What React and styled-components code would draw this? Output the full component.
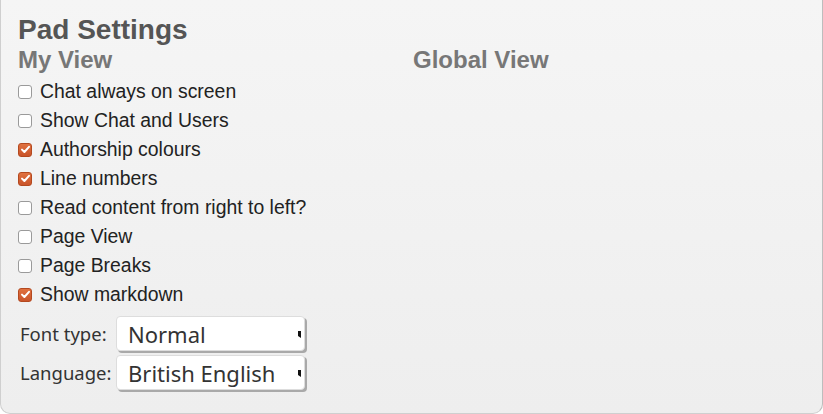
import styled, { createGlobalStyle } from 'styled-components'

const GlobalStyle = createGlobalStyle`
  html, body {
    margin: 0;
    padding: 0;
    background: #ffffff;
  }
  body {
    font-family: "Liberation Sans", Arial, sans-serif;
  }
`

const myView = [
  { label: 'Chat always on screen', checked: false },
  { label: 'Show Chat and Users', checked: false },
  { label: 'Authorship colours', checked: true },
  { label: 'Line numbers', checked: true },
  { label: 'Read content from right to left?', checked: false },
  { label: 'Page View', checked: false },
  { label: 'Page Breaks', checked: false },
  { label: 'Show markdown', checked: true },
]

const selects = [
  { label: 'Font type:', value: 'Normal' },
  { label: 'Language:', value: 'British English' },
]

const Check = ({ checked }) => (
  <Box checked={checked}>
    {checked && (
      <svg width="11" height="11" viewBox="0 0 11 11">
        <path d="M2 5.6 L4.4 8 L9 2.8" fill="none" stroke="#fff" strokeWidth="2" strokeLinecap="round" strokeLinejoin="round" />
      </svg>
    )}
  </Box>
)

const App = () => (
  <>
    <GlobalStyle />
    <Panel>
      <Title>Pad Settings</Title>
      <Columns>
        <Column>
          <Heading>My View</Heading>
          <List>
            {myView.map((o) => (
              <Row key={o.label}>
                <Check checked={o.checked} />
                <Label>{o.label}</Label>
              </Row>
            ))}
          </List>
          <Selects>
            {selects.map((s) => (
              <SelectRow key={s.label}>
                <SelectLabel>{s.label}</SelectLabel>
                <Dropdown>
                  <span>{s.value}</span>
                  <Arrow />
                </Dropdown>
              </SelectRow>
            ))}
          </Selects>
        </Column>
        <Column>
          <Heading>Global View</Heading>
        </Column>
      </Columns>
    </Panel>
  </>
)

export default App

const Panel = styled.div`
  box-sizing: border-box;
  width: 823px;
  height: 414px;
  padding: 14px 0 0 17px;
  background: linear-gradient(to bottom, #f5f5f5 0%, #eeeeee 100%);
  border: 1px solid #cfcfcf;
  border-top: none;
  border-right-color: #bdbdbd;
  border-radius: 0 0 10px 10px;
`

const Title = styled.h1`
  margin: 0;
  font-size: 28px;
  line-height: 32px;
  font-weight: bold;
  color: #555555;
`

const Columns = styled.div`
  display: grid;
  grid-template-columns: 395px 1fr;
`

const Column = styled.div`
  display: flex;
  flex-direction: column;
`

const Heading = styled.h2`
  margin: 0;
  font-size: 24px;
  line-height: 28px;
  font-weight: bold;
  color: #777777;
`

const List = styled.div`
  display: flex;
  flex-direction: column;
  margin-top: 3px;
`

const Row = styled.label`
  display: flex;
  align-items: center;
  height: 29px;
  gap: 8px;
`

const Box = styled.span`
  box-sizing: border-box;
  width: 14px;
  height: 14px;
  border-radius: 3px;
  display: flex;
  align-items: center;
  justify-content: center;
  border: 1px solid ${(p) => (p.checked ? '#b4491f' : '#9a9a9a')};
  background: ${(p) =>
    p.checked ? 'linear-gradient(to bottom, #e0713f, #c9542a)' : '#ffffff'};
`

const Label = styled.span`
  font-size: 19.4px;
  color: #222222;
`

const Selects = styled.div`
  display: flex;
  flex-direction: column;
  gap: 4px;
  margin-top: 7px;
  padding-left: 2px;
`

const SelectRow = styled.div`
  display: flex;
  align-items: center;
  gap: 3px;
`

const SelectLabel = styled.span`
  width: 93px;
  font-family: "Noto Sans", "Open Sans", sans-serif;
  font-size: 18.5px;
  color: #333333;
  white-space: nowrap;
`

const Dropdown = styled.div`
  position: relative;
  box-sizing: border-box;
  width: 189px;
  height: 35px;
  display: flex;
  align-items: center;
  padding-left: 11px;
  background: #ffffff;
  border: 1px solid #dddddd;
  border-radius: 4px;
  box-shadow: 2px 2px 0 #a9a9a9;
  font-family: "Noto Sans", "Open Sans", sans-serif;
  font-size: 22px;
  color: #333333;
`

const Arrow = styled.span`
  position: absolute;
  right: 3px;
  top: 14px;
  width: 3px;
  height: 7px;
  background: #111111;
  clip-path: polygon(0 0, 100% 0, 100% 100%, 0 70%);
`
